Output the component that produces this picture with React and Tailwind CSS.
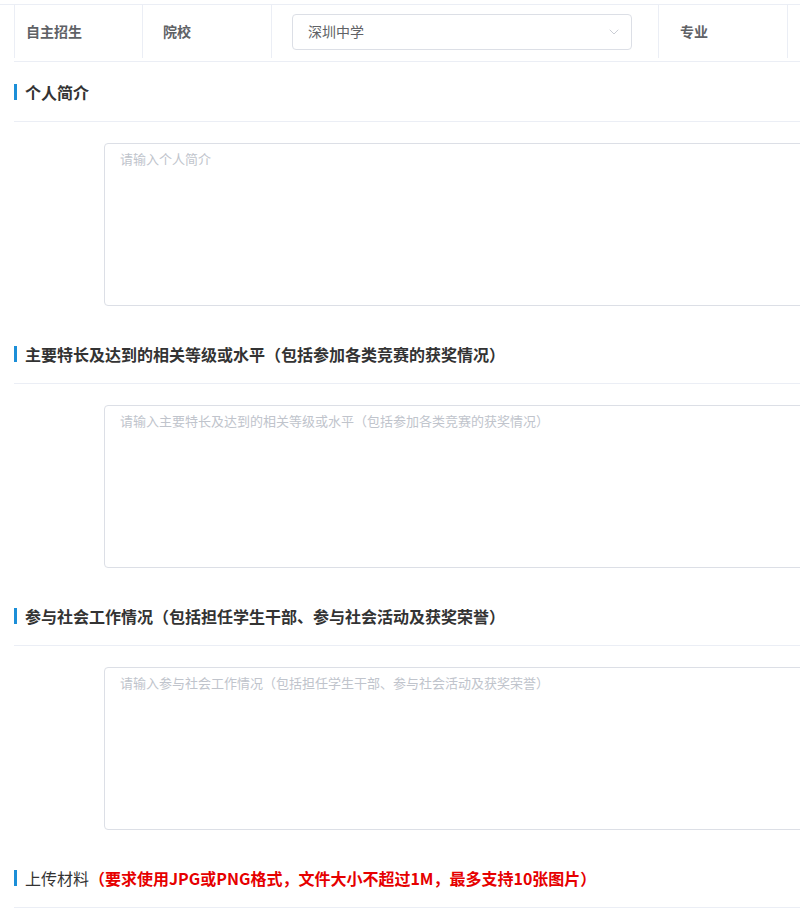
import { ChevronDown } from "lucide-react";

const sections = [
  {
    title: "个人简介",
    placeholder: "请输入个人简介",
  },
  {
    title: "主要特长及达到的相关等级或水平（包括参加各类竞赛的获奖情况）",
    placeholder: "请输入主要特长及达到的相关等级或水平（包括参加各类竞赛的获奖情况）",
  },
  {
    title: "参与社会工作情况（包括担任学生干部、参与社会活动及获奖荣誉）",
    placeholder: "请输入参与社会工作情况（包括担任学生干部、参与社会活动及获奖荣誉）",
  },
];

function SectionTitle({ children }) {
  return (
    <div className="flex h-[60px] items-center border-b border-[#ebeef5]">
      <span className="mr-[8px] h-[16px] w-[3px] bg-[#1c8fd8]" />
      {children}
    </div>
  );
}

export default function App() {
  return (
    <div
      className="w-[800px] h-[923px] overflow-hidden bg-white"
      style={{ fontFamily: '"Microsoft YaHei", "Noto Sans CJK SC", sans-serif' }}
    >
      <div className="mt-[4px] w-[1200px] border-t border-[#ebeef5]">
        {/* info row */}
        <div className="ml-[14px] flex h-[57px] border-b border-[#ebeef5] pb-[3px] text-[14px]">
          <div className="flex w-[128px] items-center border-l border-[#ebeef5] pl-[11px] font-bold text-[#5f6266]">
            自主招生
          </div>
          <div className="flex w-[129px] items-center border-l border-[#ebeef5] pl-[20px] font-bold text-[#5f6266]">
            院校
          </div>
          <div className="flex w-[387px] items-center border-l border-[#ebeef5] pl-[20px]">
            <div className="flex h-[36px] w-[340px] items-center justify-between rounded-[4px] border border-[#dcdfe6] pl-[15px] pr-[9px] text-[#606266]">
              <span>深圳中学</span>
              <ChevronDown size={16} strokeWidth={1.25} className="text-[#c0c4cc]" />
            </div>
          </div>
          <div className="flex w-[129px] items-center border-l border-[#ebeef5] pl-[21px] font-bold text-[#5f6266]">
            专业
          </div>
          <div className="flex-1 border-l border-[#ebeef5]" />
        </div>

        <div className="ml-[14px]">
          {sections.map((s) => (
            <div key={s.title}>
              <SectionTitle>
                <span className="text-[16px] font-bold text-[#333]">{s.title}</span>
              </SectionTitle>
              <div className="ml-[90px] mt-[21px] mb-[18px] h-[163px] w-[900px] rounded-[4px] border border-[#dcdfe6] px-[15px] py-[5px] text-[13px] leading-[19.5px] text-[#c0c4cc]">
                {s.placeholder}
              </div>
            </div>
          ))}

          <SectionTitle>
            <span className="text-[16px] text-[#333]">上传材料</span>
            <span className="text-[16px] font-bold text-[#e60000]">
              （要求使用JPG或PNG格式，文件大小不超过1M，最多支持10张图片）
            </span>
          </SectionTitle>
        </div>
      </div>
    </div>
  );
}
